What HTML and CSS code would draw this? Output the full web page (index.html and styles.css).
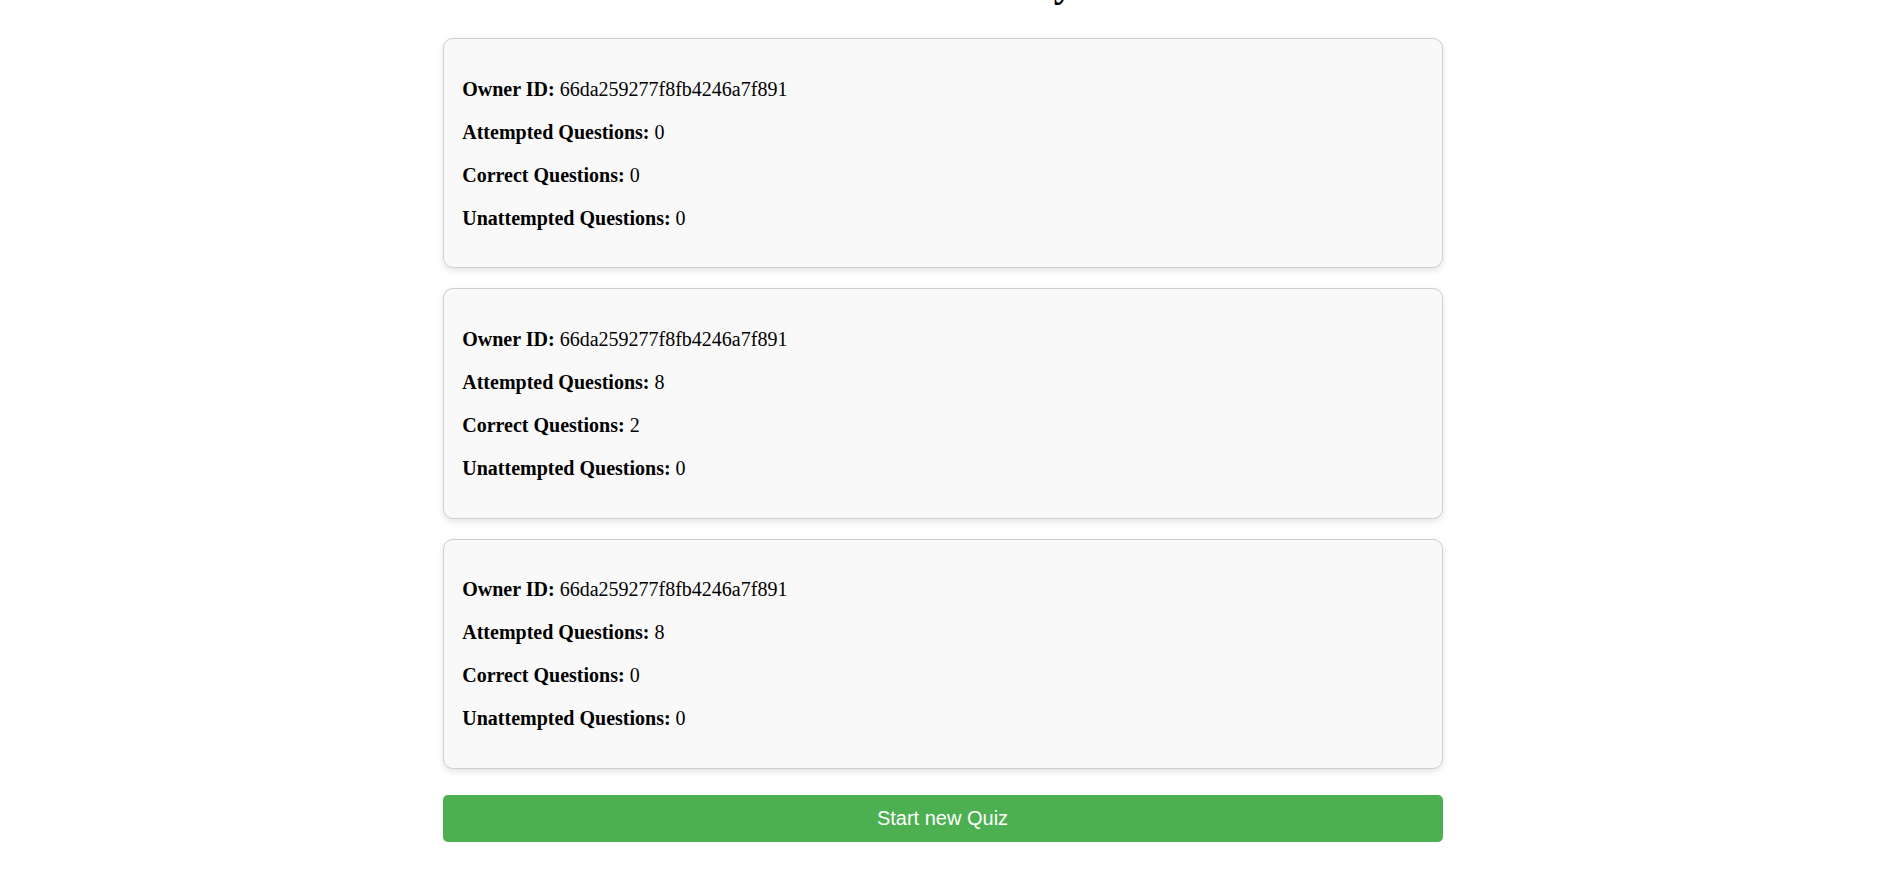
FILE: index.html
```html
<!DOCTYPE html>
<html lang="en">
<head>
<meta charset="utf-8">
<title>Your Summary</title>
<link rel="stylesheet" href="styles.css">
</head>
<body>
<div class="page">
  <h1 class="title">Your Summary</h1>
  <div class="card" id="first-card">
    <p><strong>Owner ID:</strong> 66da259277f8fb4246a7f891</p>
    <p><strong>Attempted Questions:</strong> 0</p>
    <p><strong>Correct Questions:</strong> 0</p>
    <p><strong>Unattempted Questions:</strong> 0</p>
  </div>
  <div class="card">
    <p><strong>Owner ID:</strong> 66da259277f8fb4246a7f891</p>
    <p><strong>Attempted Questions:</strong> 8</p>
    <p><strong>Correct Questions:</strong> 2</p>
    <p><strong>Unattempted Questions:</strong> 0</p>
  </div>
  <div class="card">
    <p><strong>Owner ID:</strong> 66da259277f8fb4246a7f891</p>
    <p><strong>Attempted Questions:</strong> 8</p>
    <p><strong>Correct Questions:</strong> 0</p>
    <p><strong>Unattempted Questions:</strong> 0</p>
  </div>
  <button class="start-btn" type="button">Start new Quiz</button>
</div>
<script src="script.js"></script>
</body>
</html>
```

FILE: styles.css
```css
html, body {
  margin: 0;
  padding: 0;
  background: #ffffff;
}

body {
  font-family: "Liberation Serif", "Times New Roman", serif;
  font-size: 20px;
  color: #000000;
}

.page {
  width: 1000px;
  margin: 0 auto;
  padding: 10px 0 80px;
}

.title {
  font-size: 40px;
  font-weight: bold;
  text-align: center;
  margin: 27px 0 32px;
}

.card {
  background: #f9f9f9;
  border: 1px solid #cfcfcf;
  border-radius: 10px;
  padding: 18.75px 18.75px 17.5px;
  margin-bottom: 20px;
  box-shadow: 0 2.5px 6px rgba(0, 0, 0, 0.1);
}

.card p {
  margin: 20px 0;
}

.start-btn {
  display: block;
  width: 100%;
  margin-top: 26px;
  padding: 12px 0;
  border: none;
  border-radius: 5px;
  background: #4caf50;
  color: #ffffff;
  font-family: "Liberation Sans", Arial, sans-serif;
  font-size: 20px;
  line-height: 23px;
  cursor: pointer;
}
```

FILE: script.js
```js
(function () {
  var card = document.getElementById('first-card');
  var top = card.getBoundingClientRect().top + window.scrollY;
  window.scrollTo(0, Math.round(top - 38));
})();
```
